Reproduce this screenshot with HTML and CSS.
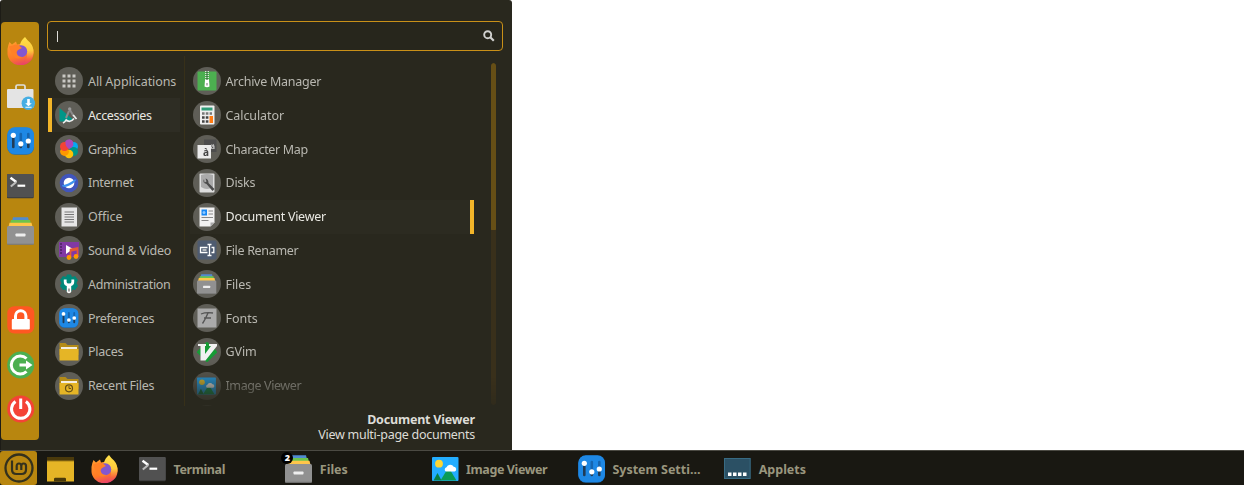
FILE: index.html
```html
<!DOCTYPE html>
<html lang="en">
<head>
<meta charset="utf-8">
<title>Application menu</title>
<link rel="stylesheet" href="styles.css">
</head>
<body>
<svg class="sprite" width="0" height="0" aria-hidden="true">
  <defs>
    <linearGradient id="fox" x1="0.2" y1="0" x2="0.5" y2="1"><stop offset="0" stop-color="#ff9a2e"/><stop offset=".65" stop-color="#ff7b25"/><stop offset="1" stop-color="#e9416b"/></linearGradient>
    <linearGradient id="flame" x1="0" y1="0" x2="0" y2="1"><stop offset="0" stop-color="#ffe14a"/><stop offset=".5" stop-color="#fdc93c"/><stop offset=".8" stop-color="#f8673c"/><stop offset="1" stop-color="#e9416b"/></linearGradient>
  </defs>
  <symbol id="firefox" viewBox="0 0 28 28">
    <path d="M.5 12Q1 8 2.500 5L5 7.500 9 4.500 10 7.500 18 6 25 10Q27 13 26.500 17A13 12 0 0 1 .5 15.500Z" fill="url(#fox)"/>
    <path d="M18 0Q20 3 23 5.500 27 10 26.500 16 25.500 25 15 27.500 21 23 20 16 19 11 13 8 14 3 18 0Z" fill="url(#flame)"/>
    <circle cx="14.200" cy="14.200" r="6" fill="#8257cf"/>
    <path d="M2 9.500 9 7.500Q13 8.500 15 11 12 12 10.500 13.500 9 15 10 17 11 20 15.500 20 10 23.500 6.500 19 3.500 15 2 9.500Z" fill="#ff8126"/>
  </symbol>
  <symbol id="store" viewBox="0 0 28 28">
    <path d="M9 8V4.500Q9 3 10.500 3H16.500Q18 3 18 4.500V8" fill="none" stroke="#dedede" stroke-width="1.700"/>
    <rect x="0" y="7" width="26.500" height="19" rx="1" fill="#e4e4e4"/>
    <circle cx="21.300" cy="21.300" r="6.700" fill="#46aee3"/>
    <path d="M20.200 17h2.600v4.200h2l-3.300 3-3.300-3h2zM18.400 24.700h6.200v1h-6.200z" fill="#fff"/>
  </symbol>
  <symbol id="settings" viewBox="0 0 28 28">
    <rect x=".3" y=".8" width="26.700" height="27" rx="7.500" fill="#176fbd"/>
    <rect x=".3" y=".3" width="26.700" height="26.800" rx="7.500" fill="#1e88e5"/>
    <g stroke-width="2.600" stroke-linecap="round"><path d="M6.300 9v11M13.800 17v3M21.300 15v5" stroke="#203c58"/><path d="M13.800 7v7M21.300 7v5" stroke="#1565b0"/></g>
    <g fill="#fff"><circle cx="6.300" cy="8.300" r="2.600"/><circle cx="13.800" cy="16.800" r="2.600"/><circle cx="21.300" cy="14" r="2.600"/></g>
  </symbol>
  <symbol id="terminal" viewBox="0 0 28 28">
    <rect x="0" y="2.300" width="26.700" height="24" rx="1" fill="#3b3b3b"/>
    <rect x="0" y="2" width="26.700" height="23.300" rx="1" fill="#515151"/>
    <path d="M3.500 5.700 9.300 10" fill="none" stroke="#fff" stroke-width="2.400"/><path d="M9.300 10 3.800 14.500" stroke="#bbb" stroke-width="2.200"/>
    <path d="M10.500 13.700h7.700" stroke="#fff" stroke-width="2.200"/>
  </symbol>
  <symbol id="files" viewBox="0 0 28 28">
    <path d="M6 .3h15l1 4H5z" fill="#508bd0"/><path d="M4 3h19l1 4H3z" fill="#6cc34d"/><path d="M2.500 5.700h22l1 4h-24z" fill="#ffc64a"/>
    <path d="M1 9h25q1 .5 1 2v15.500q0 1-1 1H1q-1 0-1-1V11Q0 9.500 1 9z" fill="#919191"/>
    <path d="M0 26.800h27q0 .9-1 .9H1q-1 0-1-.9z" fill="#777"/><rect x="8.500" y="16.500" width="10" height="3" rx=".7" fill="#eee"/>
  </symbol>
  <symbol id="lock" viewBox="0 0 28 28">
    <rect x=".3" y=".3" width="27" height="27.300" rx="7" fill="#ff5722"/>
    <path d="M8.500 14V10a5.200 5.200 0 0 1 10.400 0v4" fill="none" stroke="#fff" stroke-width="3"/>
    <rect x="4.800" y="13" width="18" height="10.500" rx="1" fill="#fff"/>
  </symbol>
  <symbol id="logout" viewBox="0 0 28 28">
    <circle cx="13.700" cy="14" r="13.500" fill="#4caf50"/>
    <path d="M19.500 7.500A9 9 0 1 0 19.500 20.500" fill="none" stroke="#fff" stroke-width="3"/>
    <path d="M12.500 12.400H19V9.500l6.500 4.500-6.500 4.500v-2.900h-6.500z" fill="#fff"/>
  </symbol>
  <symbol id="power" viewBox="0 0 28 28">
    <circle cx="13.700" cy="14" r="13.500" fill="#f44336"/>
    <path d="M8.500 6.500a9.200 9.200 0 1 0 10.400 0M13.700 3.500V14" fill="none" stroke="#fff" stroke-width="3"/>
  </symbol>
  <symbol id="picture" viewBox="0 0 28 28">
    <rect x="0" y="2" width="26.500" height="24" rx="1" fill="#23adff"/><circle cx="7" cy="8.700" r="3.900" fill="#ffd633"/>
    <path d="M1.500 25.500 5.500 18l4 7.500z" fill="#087f45"/><path d="M8.500 25.500 15.500 14q1-1 2 0l7 11.500z" fill="#0a9b55"/>
    <path d="M14 16.500a2.300 2.300 0 0 1 .5-4.300 4 4 0 0 1 7.200-.5 2.500 2.500 0 0 1 1 4.800z" fill="#fff"/>
  </symbol>
  <symbol id="desktop" viewBox="0 0 28 28"><path d="M0 2h27v24.500H0z" fill="#e5b526"/><path d="M0 2h27v3H0z" fill="#4a390b"/><path d="M0 5h27v1.300H0z" fill="#765b10"/><path d="M7 26.500v-3l1-.8h10l1 .8v3z" fill="#493909"/></symbol>
  <symbol id="panel" viewBox="0 0 28 28"><rect x=".5" y="3.500" width="25.700" height="20" fill="#2b5064" stroke="#386b83"/><path d="M4 17.500h3.500V21H4zM9 17.500h3.500V21H9zM14 17.500h3.500V21H14zM19 17.500h3.500V21H19z" fill="#fff"/></symbol>

  <symbol id="grid" viewBox="0 0 20 20"><g fill="#c9c8c4"><path d="M3.500 3.500h3v3h-3zM8.500 3.500h3v3h-3zM13.500 3.500h3v3h-3zM3.500 8.500h3v3h-3zM8.500 8.500h3v3h-3zM13.500 8.500h3v3h-3zM3.500 13.500h3v3h-3zM8.500 13.500h3v3h-3zM13.500 13.500h3v3h-3z"/></g></symbol>
  <symbol id="accessories" viewBox="0 0 20 20"><path d="M.5 3 14 14.500 10 16.500H.5z" fill="#009688"/><path d="M11 5 14.500 11M10 6 7 13" stroke="#8b8b8b" stroke-width="2"/><circle cx="10.700" cy="4" r="1.700" fill="#999"/><path d="M4 18Q7.500 16 6.500 14.500M6.500 14.500Q11 18.500 15 13.500M14.200 10 17.500 14" fill="none" stroke="#eee" stroke-width="1.700"/></symbol>
  <symbol id="graphics" viewBox="0 0 20 20"><circle cx="10" cy="5" r="4.500" fill="#ab47bc"/><circle cx="14.500" cy="7.500" r="4.500" fill="#03a9f4"/><circle cx="14.500" cy="12.500" r="4.500" fill="#009688"/><circle cx="10" cy="15" r="4.300" fill="#ffc107"/><circle cx="5.500" cy="12.500" r="4.400" fill="#ff9800"/><circle cx="5.500" cy="7.500" r="4.500" fill="#f44336"/><path d="M10 10Q6 7 6.500 3.500L10 .5a4.500 4.500 0 0 1 3 7.800z" fill="#ab47bc"/></symbol>
  <symbol id="internet" viewBox="0 0 20 20"><circle cx="10" cy="10" r="9.300" fill="#4055bd"/><circle cx="10" cy="10" r="5.300" fill="#fff"/><path d="M3 12Q8 12 15.800 6.500 19 6 14 10.500 7 15 3.500 13.500z" fill="#3a91ef"/></symbol>
  <symbol id="office" viewBox="0 0 20 20"><path d="M2.500.5h15.500v19H2.500z" fill="#e6e6e6"/><path d="M5.500 5h9.500M5.500 7.500h9.500M5.500 10h9.500M5.500 12.500h9.500M5.500 15h9.500" stroke="#777" stroke-width="1.200"/></symbol>
  <symbol id="media" viewBox="0 0 20 20"><path d="M0 2h20v15H0z" fill="#8139a4"/><path d="M1 4h2M1 7h2M1 10h2M1 13h2" stroke="#4b2260" stroke-width="1.500"/><path d="m7 5 7 4-7 5z" fill="#fff"/><path d="M11.500 17v-7.500l7-1.500v8M11.500 11l7-1.500" fill="none" stroke="#e65b35" stroke-width="1.700"/><circle cx="10" cy="17.500" r="2.400" fill="#ff9800"/><circle cx="17" cy="16.500" r="2.400" fill="#ff9800"/></symbol>
  <symbol id="admin" viewBox="0 0 20 20"><path d="m8 .5h4l1 2.500 3-1 3 4-1.500 3 1.500 3-3 4-3-.5L12 18H8l-1-2.500-3 .5-3-4L2.500 9 1 6l3-4 3 1z" fill="#00897b"/><path d="M6.200 5.500v2.500q0 3 3.800 3t3.800-3V5.500" fill="none" stroke="#fff" stroke-width="2.800"/><path d="M7.800 10.500h4.400v7.500q-2.200 2.500-4.400 0z" fill="#fff"/><path d="M9.200 14.500h1.600v3H9.200z" fill="#8d8d88"/></symbol>
  <symbol id="folder" viewBox="0 0 20 20"><path d="M.5 1h6l2 2h11v10H.5z" fill="#b38b18"/><path d="M2 5h16v3H2z" fill="#f3ede1"/><path d="M.5 7h19v11.500H.5z" fill="#e5b526"/></symbol>
  <symbol id="recent" viewBox="0 0 20 20"><use href="#folder"/><circle cx="10" cy="12.300" r="3.500" fill="none" stroke="#665017" stroke-width="1.200"/><path d="M10 10v2.500h2" fill="none" stroke="#665017"/></symbol>
  <symbol id="archive" viewBox="0 0 20 20"><rect x=".5" y=".5" width="19" height="19" rx="1" fill="#4caf50"/><path d="M10 0v9" stroke="#d6ead6" stroke-width="4" stroke-dasharray="1 1"/><path d="M10 0v9" stroke="#2c5b2e" stroke-width="1"/><path d="M8 9h4l.5 6.500q-2.500 1.500-5 0z" fill="#fff"/><path d="M9.300 12h1.400v2.500H9.300z" fill="#999"/></symbol>
  <symbol id="calculator" viewBox="0 0 20 20"><rect x="3" y=".5" width="14.500" height="19" rx="1" fill="#f0f0f0"/><path d="M4.500 2.500h11v3h-11z" fill="#309c78"/><path d="M5 8.500h10" stroke="#777" stroke-width="2.500" stroke-dasharray="2.600 1.200"/><path d="M5 12.500h6.500M5 16.500h6.500" stroke="#444" stroke-width="2.500" stroke-dasharray="2.600 1.200"/><path d="M12.500 11H16v7h-3.500z" fill="#ff7b12"/></symbol>
  <symbol id="disks" viewBox="0 0 20 20"><rect x="2.500" y=".5" width="15" height="19" rx="1" fill="#dedede"/><path d="M4 2q6-2 12 0v12q-6 4-12 0z" fill="#aaa"/><path d="M7 6q-2 4 2.500 5l6 7 2-2-6-6q0-4-3-4.500l1 3-2 1z" fill="#4c4c4c"/></symbol>
  <symbol id="document" viewBox="0 0 20 20"><path d="M2.500.5h15v15l-4 4h-11z" fill="#f2f2f2"/><path d="M4.500 2.500h5.500v6H4.500z" fill="#1687f4"/><circle cx="7" cy="5.500" r="1.500" fill="#8dc8ff"/><path d="M11.500 4H16M11.500 7H16M4.500 10.500H16M4.500 13.500h7" stroke="#888"/><path d="M13.500 19.500v-4h4z" fill="#aaa"/></symbol>
  <symbol id="renamer" viewBox="0 0 20 20"><rect x=".5" y=".5" width="19" height="19" rx="1.500" fill="#4e5b70"/><path d="M10.500 7.500h-7v5h7M14.500 7.500h2.300v5h-2.300M12.500 5v10M10.500 4.500h4M10.500 15.500h4" fill="none" stroke="#fff" stroke-width="1.300"/><path d="M5.500 10h4" stroke="#ddd" stroke-width="1.500"/></symbol>
  <symbol id="fonts" viewBox="0 0 20 20"><path d="M.5.500h19v19H.5z" fill="#aaa"/><path d="M4 6q5-2 12-1M11 5Q8 12 5.500 15.500M7 10h7" fill="none" stroke="#555" stroke-width="1.300"/></symbol>
  <symbol id="gvim" viewBox="0 0 20 20"><path d="m10-.5 10.500 10.500L10 20.500-.5 10z" fill="#169b35"/><path d="M1 2h8v2H8v8l6-8h-2V2h8v2L8.500 18.500H3.500V4H1z" fill="#f1f1f1"/></symbol>
</svg>

<main class="menu">
  <nav class="favorites">
    <div class="favorites__group">
      <svg class="icon"><use href="#firefox"/></svg>
      <svg class="icon"><use href="#store"/></svg>
      <svg class="icon"><use href="#settings"/></svg>
      <svg class="icon"><use href="#terminal"/></svg>
      <svg class="icon"><use href="#files"/></svg>
    </div>
    <div class="favorites__group favorites__group--session">
      <svg class="icon"><use href="#lock"/></svg>
      <svg class="icon"><use href="#logout"/></svg>
      <svg class="icon"><use href="#power"/></svg>
    </div>
  </nav>
  <section class="content">
    <div class="search">
      <span class="search__caret"></span>
      <svg class="search__icon" viewBox="0 0 12 12"><circle cx="4.700" cy="4.700" r="3.500" fill="none" stroke="#d1d1cf" stroke-width="1.900"/><path d="m7.300 7.300 3.500 3.500" stroke="#d1d1cf" stroke-width="2.200"/></svg>
    </div>
    <div class="columns">
      <ul class="list categories">
        <li class="row"><svg class="badge"><use href="#grid"/></svg><span class="track-1">All Applications</span></li>
        <li class="row row--active"><svg class="badge"><use href="#accessories"/></svg><span class="track-4">Accessories</span></li>
        <li class="row"><svg class="badge"><use href="#graphics"/></svg><span class="track-4">Graphics</span></li>
        <li class="row"><svg class="badge"><use href="#internet"/></svg><span class="track-3">Internet</span></li>
        <li class="row"><svg class="badge"><use href="#office"/></svg><span>Office</span></li>
        <li class="row"><svg class="badge"><use href="#media"/></svg><span class="track-2">Sound &amp; Video</span></li>
        <li class="row"><svg class="badge"><use href="#admin"/></svg><span class="track-3">Administration</span></li>
        <li class="row"><svg class="badge"><use href="#settings"/></svg><span class="track-3">Preferences</span></li>
        <li class="row"><svg class="badge"><use href="#folder"/></svg><span class="track-2">Places</span></li>
        <li class="row"><svg class="badge"><use href="#recent"/></svg><span class="track-2">Recent Files</span></li>
      </ul>
      <ul class="list apps">
        <li class="row"><svg class="badge"><use href="#archive"/></svg><span class="track-2">Archive Manager</span></li>
        <li class="row"><svg class="badge"><use href="#calculator"/></svg><span class="track-1">Calculator</span></li>
        <li class="row"><svg class="badge" viewBox="0 0 20 20"><path d="M7 .5h12.500V13H7z" fill="#4d4d4d"/><text x="13.500" y="9.500" class="glyph glyph--light">ä</text><path d="M.5 6H14v13.500H.5z" fill="#ececec"/><text x="6" y="17.300" class="glyph">à</text></svg><span class="track-3">Character Map</span></li>
        <li class="row"><svg class="badge"><use href="#disks"/></svg><span class="track-2">Disks</span></li>
        <li class="row row--active"><svg class="badge"><use href="#document"/></svg><span class="track-2">Document Viewer</span></li>
        <li class="row"><svg class="badge"><use href="#renamer"/></svg><span class="track-3">File Renamer</span></li>
        <li class="row"><svg class="badge"><use href="#files"/></svg><span class="track-1">Files</span></li>
        <li class="row"><svg class="badge"><use href="#fonts"/></svg><span>Fonts</span></li>
        <li class="row"><svg class="badge"><use href="#gvim"/></svg><span class="track-1">GVim</span></li>
        <li class="row"><svg class="badge"><use href="#picture"/></svg><span class="track-4">Image Viewer</span></li>
        <li class="row"><svg class="badge"></svg></li>
      </ul>
      <div class="scrollbar"><div class="scrollbar__thumb"></div></div>
    </div>
    <div class="summary"><strong class="summary__name">Document Viewer</strong><span class="summary__text">View multi-page documents</span></div>
  </section>
</main>
<footer class="taskbar">
  <div class="start"><svg class="start__logo" viewBox="0 0 30 30" fill="none" stroke="#33311d"><circle cx="15" cy="15" r="13.500" stroke-width="2.300"/><path d="M8 7.500V16.500q0 4.500 4.500 4.500h5q4.500 0 4.500-4.500v-3.500q0-2.500-2.300-2.500T17.300 13v4M17.300 13q0-2.500-2.300-2.500T12.700 13v4" stroke-width="2.200"/></svg></div>
  <svg class="icon launcher"><use href="#desktop"/></svg>
  <svg class="icon launcher"><use href="#firefox"/></svg>
  <div class="tasks">
    <div class="task"><svg class="icon"><use href="#terminal"/></svg><span class="track-4">Terminal</span></div>
    <div class="task"><svg class="icon"><use href="#files"/></svg><b class="task__count">2</b><span>Files</span></div>
    <div class="task"><svg class="icon"><use href="#picture"/></svg><span class="track-4">Image Viewer</span></div>
    <div class="task"><svg class="icon"><use href="#settings"/></svg><span>System Setti...</span></div>
    <div class="task"><svg class="icon"><use href="#panel"/></svg><span>Applets</span></div>
  </div>
</footer>
</body>
</html>
```
FILE: styles.css
```css
* { box-sizing: border-box; }
body { margin: 0; width: 1244px; height: 485px; overflow: hidden; background: #fff; font: 12.5px/16px "Noto Sans", "Open Sans", sans-serif; color: #b9b8b1; display: flex; flex-direction: column; }
.sprite { position: absolute; }
.icon { width: 28px; height: 28px; flex: none; display: block; }
.glyph { font: bold 10px "Noto Sans", sans-serif; fill: #444; }
.glyph--light { font-size: 7.5px; fill: #ccc; }

/* Letter spacing steps for labels */
.track-1 { letter-spacing: -0.08px; }
.track-2 { letter-spacing: -0.25px; }
.track-3 { letter-spacing: -0.32px; }
.track-4 { letter-spacing: -0.4px; }

.menu { width: 512px; height: 450px; background: #29281e; border-left: 1px solid #1d1c16; border-radius: 3px 3px 0 0; display: flex; padding-top: 21px; flex: none; }
.favorites { width: 38px; height: 418px; margin-top: 1px; padding: 15px 0 17px 6px; border-radius: 4px; background: #b8860f; display: flex; flex-direction: column; justify-content: space-between; flex: none; }
.favorites__group { display: flex; flex-direction: column; gap: 17px; }
.favorites__group--session { gap: 16.5px; }
.content { margin-left: 8px; width: 456px; display: flex; flex-direction: column; }
.search { height: 30px; border: 1.5px solid #c99018; border-radius: 4px; display: flex; align-items: center; justify-content: space-between; padding: 0 7px 0 9px; background: #27261c; flex: none; }
.search__caret { width: 1px; height: 11px; background: #deddd8; }
.search__icon { width: 12px; height: 12px; }

.columns { display: flex; height: 350px; padding-top: 5px; }
.list { margin: 0; padding: 8.6px 0 0; list-style: none; height: 350px; overflow: hidden; flex: none; }
.categories { width: 138px; padding-right: 4px; padding-left: 1px; border-right: 1px solid #373019; }
.apps { width: 289px; padding-left: 5px; -webkit-mask-image: linear-gradient(#000 306px, rgba(0,0,0,.36) 335px, transparent 358px); mask-image: linear-gradient(#000 306px, rgba(0,0,0,.36) 335px, transparent 358px); }
.row { height: 33.8px; display: flex; align-items: center; padding-left: 7px; gap: 5px; white-space: nowrap; }
.row span { padding-top: 1px; }
.apps .row { padding-left: 3px; gap: 4.500px; }
.row--active { background: #2e2d24; color: #e9e8e2; }
.categories .row--active { border-left: 4px solid #f2b529; padding-left: 3px; }
.apps .row--active { background: #2c2b21; border-right: 4px solid #f2b529; }
.badge { width: 28px; height: 28px; padding: 4px; border-radius: 50%; background: #5f5e57; flex: none; overflow: visible; }
.scrollbar { width: 5px; height: 342px; margin: 7px 0 0 17px; border-radius: 3px; background: #39301b; -webkit-mask-image: linear-gradient(#000 92%, rgba(0,0,0,.5)); mask-image: linear-gradient(#000 92%, rgba(0,0,0,.5)); }
.scrollbar__thumb { height: 167px; border-radius: 3px 3px 1px 1px; background: #664f16; }
.summary { display: flex; flex-direction: column; align-items: flex-end; padding: 11px 28px 0 0; line-height: 15px; color: #dddcd7; }
.summary__name { letter-spacing: -0.2px; }
.summary__text { letter-spacing: -0.28px; }

.taskbar { height: 35px; background: #191812; border-top: 1px solid #4b4a43; display: flex; align-items: center; flex: none; }
.start { width: 37px; height: 34px; background: #b8860f; border-radius: 3px; display: flex; align-items: center; justify-content: center; margin-right: 10px; }
.start__logo { width: 30px; height: 30px; }
.launcher { margin-right: 16px; position: relative; top: 0.5px; }
.tasks { display: flex; margin-left: 4px; padding-top: 1px; }
.task { width: 146.3px; display: flex; align-items: center; gap: 6.500px; font-weight: 700; color: #99967e; position: relative; white-space: nowrap; }
.task span { padding-top: 2px; }
.task__count { position: absolute; left: -4px; top: -3px; width: 12px; height: 12px; border-radius: 50%; background: #000; color: #fff; font-size: 9px; line-height: 12px; text-align: center; }
```
